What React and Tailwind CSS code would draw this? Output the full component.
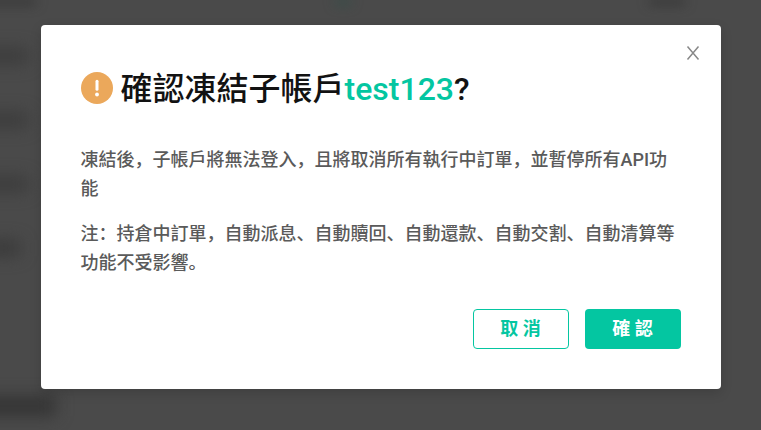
import React from "react";

function Backdrop() {
  return (
    <div aria-hidden="true" className="absolute inset-0 flex flex-col overflow-hidden bg-[#4a4a4a]">
      <div className="flex h-2 justify-between pr-19">
        <div className="-ml-5 h-1 w-14 bg-[#2a2a2a] blur-[6px]" />
        <div className="h-1 w-4 bg-[#2a5047] blur-[6px]" />
        <div className="h-1 w-9 bg-[#2a2a2a] blur-[6px]" />
      </div>
      <div className="-ml-5 mt-10 flex flex-col gap-12">
        <div className="h-4 w-12 bg-[#3c3c3c] blur-[8px]" />
        <div className="h-4 w-12 bg-[#3c3c3c] blur-[8px]" />
        <div className="h-4 w-12 bg-[#3c3c3c] blur-[8px]" />
        <div className="h-4 w-10 bg-[#3a3a3a] blur-[8px]" />
      </div>
      <div className="-ml-5 mt-35 h-5 w-19 bg-[#343434] blur-[8px]" />
    </div>
  );
}

function WarningIcon() {
  return (
    <svg viewBox="0 0 32 32" className="mt-[7px] size-8 shrink-0" aria-hidden="true">
      <circle cx="16" cy="16" r="16" fill="#eba85b" />
      <path d="M16 9.3v8" stroke="#fff" strokeWidth="3" strokeLinecap="round" />
      <circle cx="16" cy="22.5" r="1.9" fill="#fff" />
    </svg>
  );
}

export default function App() {
  return (
    <div className="relative min-h-screen px-10 py-[25px] font-[Roboto,'Noto_Sans_CJK_SC',sans-serif]">
      <Backdrop />
      <div
        role="dialog"
        aria-modal="true"
        aria-labelledby="dialog-title"
        className="relative mx-auto max-w-[680px] rounded bg-white p-10 shadow-[0_4px_12px_rgba(0,0,0,0.15)]"
      >
        <button type="button" aria-label="關閉" className="absolute top-5 right-5 flex size-4 items-center justify-center">
          <svg viewBox="0 0 16 16" className="size-4" fill="none" stroke="#888" strokeWidth="1.5" aria-hidden="true">
            <path d="M2.5 1.5l11 13M13.5 1.5l-11 13" />
          </svg>
        </button>
        <div className="flex items-start gap-2">
          <WarningIcon />
          <h1 id="dialog-title" className="text-[32px] leading-[48px] font-medium text-[#121212]">
            確認凍結子帳戶<span className="text-[#04c6a1]">test123</span>?
          </h1>
        </div>
        <div className="mt-8 space-y-4 text-lg leading-[29px] font-medium text-[#5a5a5a]">
          <p>凍結後，子帳戶將無法登入，且將取消所有執行中訂單，並暫停所有API功能</p>
          <p>注：持倉中訂單，自動派息、自動贖回、自動還款、自動交割、自動清算等功能不受影響。</p>
        </div>
        <div className="mt-8 flex justify-end gap-4 text-lg font-bold">
          <button type="button" className="h-10 w-24 rounded border border-[#04c6a1] text-[#04c6a1]">
            取 消
          </button>
          <button type="button" className="h-10 w-24 rounded bg-[#04c6a1] text-white">
            確 認
          </button>
        </div>
      </div>
    </div>
  );
}
